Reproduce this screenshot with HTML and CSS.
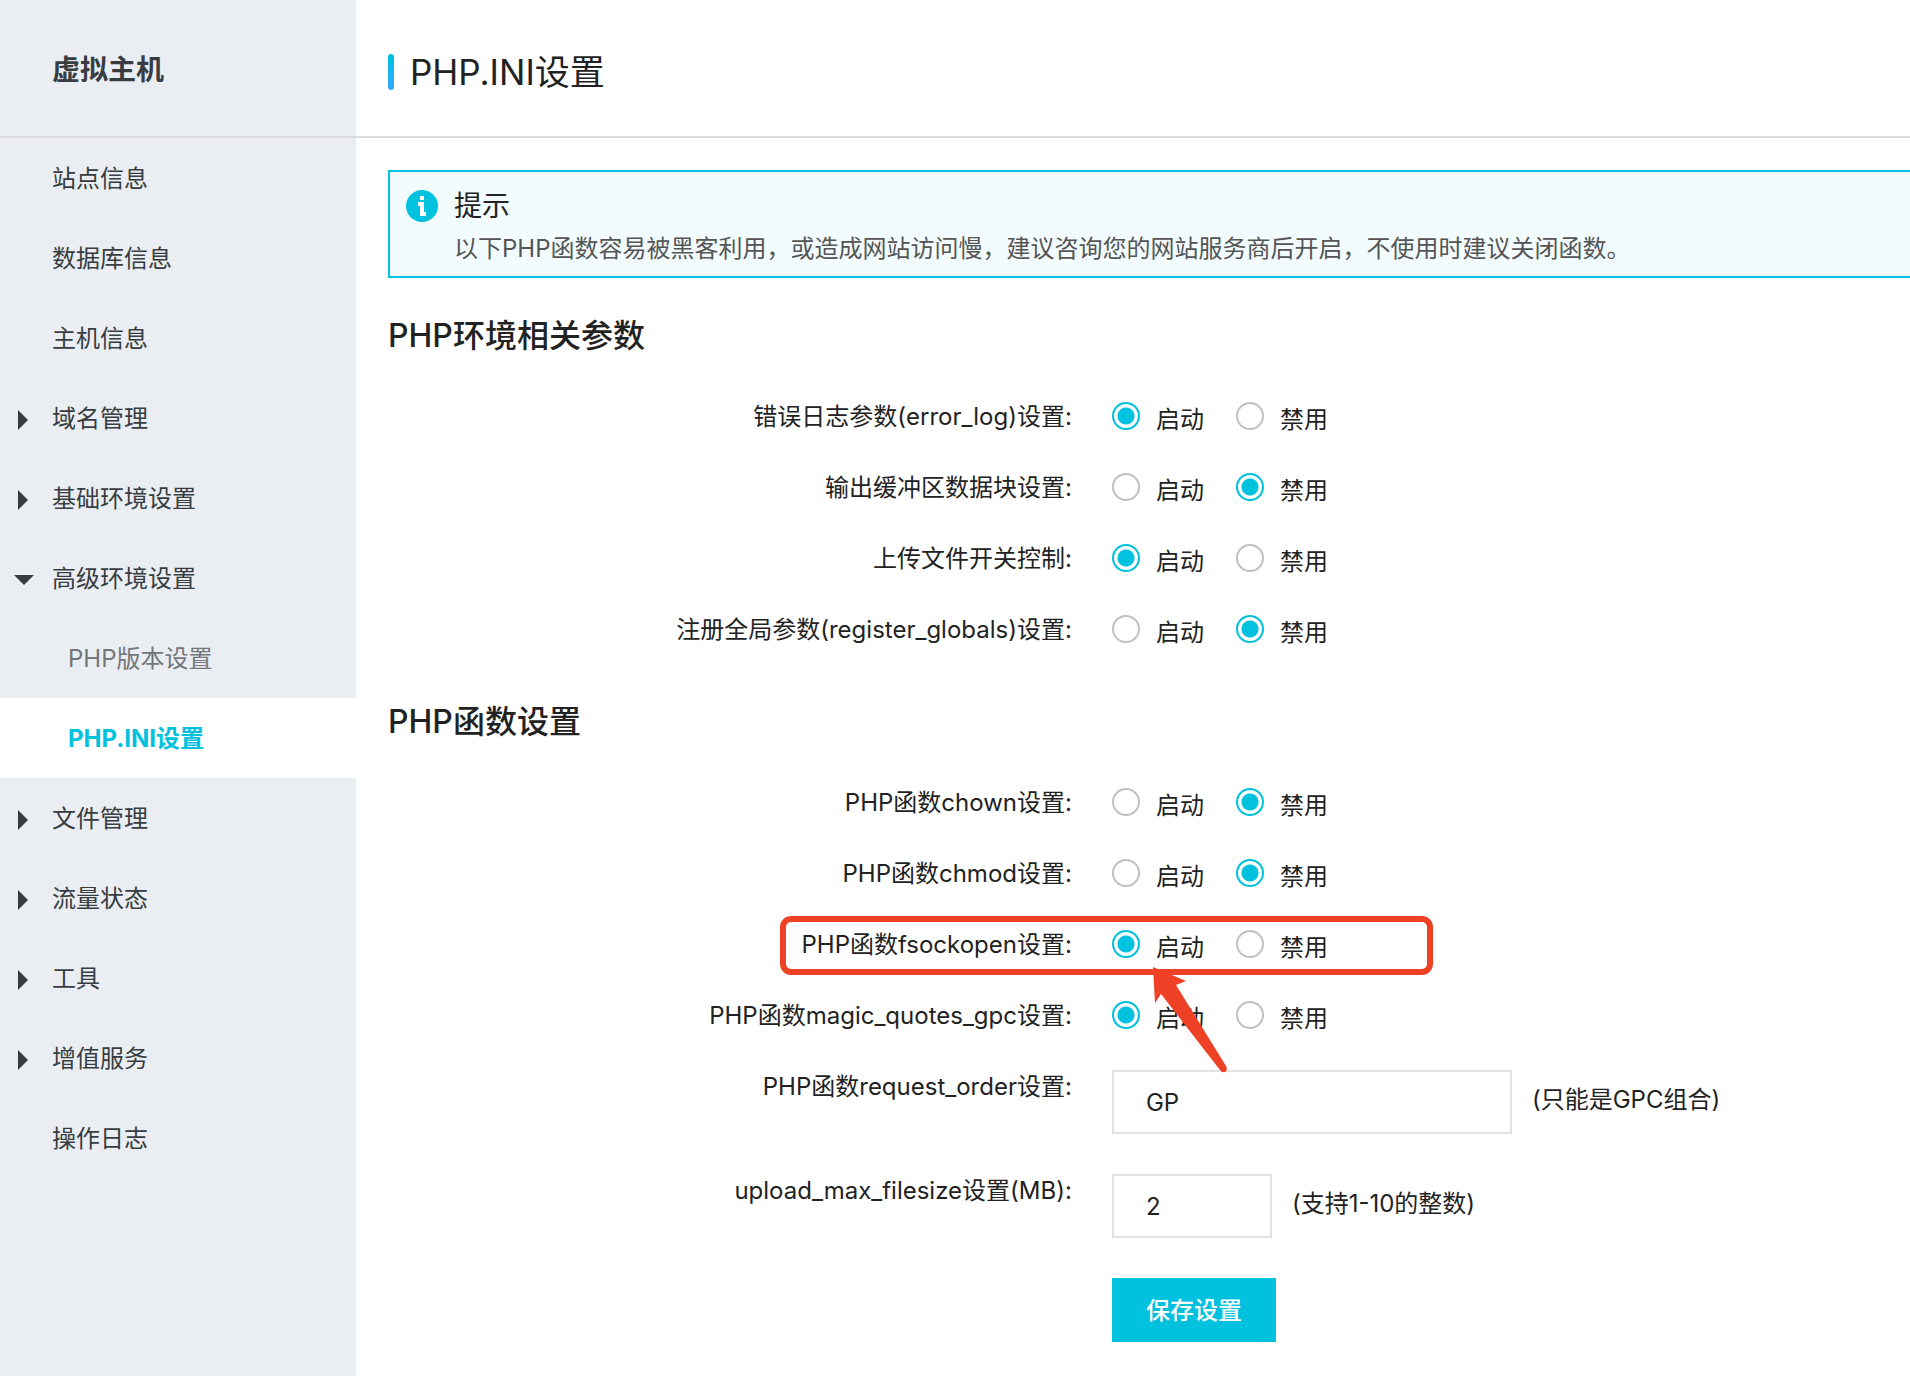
FILE: index.html
```html
<!DOCTYPE html>
<html lang="zh-CN">
<head>
    <meta charset="utf-8">
    <title>PHP.INI设置</title>
    <meta name="viewport" content="width=device-width,initial-scale=1">
    <link rel="stylesheet" href="styles.css">
</head>

<body>
    <svg width="0" height="0" class="symbols" aria-hidden="true">
        <symbol id="arrow-right" viewBox="0 0 20 20"><path d="M4 0L14 10L4 20Z"/></symbol>
        <symbol id="arrow-down" viewBox="0 0 20 20"><path d="M0 5H20L10 15Z"/></symbol>
    </svg>

    <div class="layout">
        <aside class="sidebar">
            <div class="sidebar-title">虚拟主机</div>
            <nav class="menu">
                <a href="#" class="menu-item"><span class="menu-icon"></span>站点信息</a>
                <a href="#" class="menu-item"><span class="menu-icon"></span>数据库信息</a>
                <a href="#" class="menu-item"><span class="menu-icon"></span>主机信息</a>
                <a href="#" class="menu-item"><svg class="menu-icon"><use href="#arrow-right"/></svg>域名管理</a>
                <a href="#" class="menu-item"><svg class="menu-icon"><use href="#arrow-right"/></svg>基础环境设置</a>
                <a href="#" class="menu-item"><svg class="menu-icon"><use href="#arrow-down"/></svg>高级环境设置</a>
                <a href="#" class="menu-item sub">PHP版本设置</a>
                <a href="#" class="menu-item sub active">PHP.INI设置</a>
                <a href="#" class="menu-item"><svg class="menu-icon"><use href="#arrow-right"/></svg>文件管理</a>
                <a href="#" class="menu-item"><svg class="menu-icon"><use href="#arrow-right"/></svg>流量状态</a>
                <a href="#" class="menu-item"><svg class="menu-icon"><use href="#arrow-right"/></svg>工具</a>
                <a href="#" class="menu-item"><svg class="menu-icon"><use href="#arrow-right"/></svg>增值服务</a>
                <a href="#" class="menu-item"><span class="menu-icon"></span>操作日志</a>
            </nav>
        </aside>

        <main class="main">
            <header class="page-header">
                <h1>PHP.INI设置</h1>
            </header>

            <div class="content">
                <div class="notice">
                    <svg class="notice-icon" viewBox="0 0 32 32">
                        <circle cx="16" cy="16" r="16" fill="#00c1de"/>
                        <path d="M14 6H18V10H14ZM12 12H18V22H20V26H14V16H12Z" fill="#fff"/>
                    </svg>
                    <div>
                        <p class="notice-title">提示</p>
                        <p class="notice-text">以下PHP函数容易被黑客利用，或造成网站访问慢，建议咨询您的网站服务商后开启，不使用时建议关闭函数。</p>
                    </div>
                </div>

                <form action="#">
                    <!-- 环境参数 -->
                    <h2>PHP环境相关参数</h2>
                    <div class="row" role="radiogroup" aria-labelledby="l-log">
                        <span class="label" id="l-log">错误日志参数(error_log)设置:</span>
                        <div class="control">
                            <label class="radio"><input type="radio" name="error_log" checked>启动</label>
                            <label class="radio"><input type="radio" name="error_log">禁用</label>
                        </div>
                    </div>
                    <div class="row" role="radiogroup" aria-labelledby="l-buffer">
                        <span class="label" id="l-buffer">输出缓冲区数据块设置:</span>
                        <div class="control">
                            <label class="radio"><input type="radio" name="output_buffering">启动</label>
                            <label class="radio"><input type="radio" name="output_buffering" checked>禁用</label>
                        </div>
                    </div>
                    <div class="row" role="radiogroup" aria-labelledby="l-upload">
                        <span class="label" id="l-upload">上传文件开关控制:</span>
                        <div class="control">
                            <label class="radio"><input type="radio" name="file_uploads" checked>启动</label>
                            <label class="radio"><input type="radio" name="file_uploads">禁用</label>
                        </div>
                    </div>
                    <div class="row" role="radiogroup" aria-labelledby="l-globals">
                        <span class="label" id="l-globals">注册全局参数(register_globals)设置:</span>
                        <div class="control">
                            <label class="radio"><input type="radio" name="register_globals">启动</label>
                            <label class="radio"><input type="radio" name="register_globals" checked>禁用</label>
                        </div>
                    </div>

                    <!-- 函数设置 -->
                    <h2>PHP函数设置</h2>
                    <div class="row" role="radiogroup" aria-labelledby="l-chown">
                        <span class="label" id="l-chown">PHP函数chown设置:</span>
                        <div class="control">
                            <label class="radio"><input type="radio" name="chown">启动</label>
                            <label class="radio"><input type="radio" name="chown" checked>禁用</label>
                        </div>
                    </div>
                    <div class="row" role="radiogroup" aria-labelledby="l-chmod">
                        <span class="label" id="l-chmod">PHP函数chmod设置:</span>
                        <div class="control">
                            <label class="radio"><input type="radio" name="chmod">启动</label>
                            <label class="radio"><input type="radio" name="chmod" checked>禁用</label>
                        </div>
                    </div>
                    <div class="row" role="radiogroup" aria-labelledby="l-fsock">
                        <span class="label" id="l-fsock">PHP函数fsockopen设置:</span>
                        <div class="control">
                            <label class="radio"><input type="radio" name="fsockopen" checked>启动</label>
                            <label class="radio"><input type="radio" name="fsockopen">禁用</label>
                            <span class="mark-box"></span>
                            <svg class="mark-arrow" viewBox="0 0 76 108"><path d="M0 0L33 14L23 18L73 99Q75 103 72 105Q69 106 67 103L8 27L2 36Z" fill="#ee4125"/></svg>
                        </div>
                    </div>
                    <div class="row" role="radiogroup" aria-labelledby="l-magic">
                        <span class="label" id="l-magic">PHP函数magic_quotes_gpc设置:</span>
                        <div class="control">
                            <label class="radio"><input type="radio" name="magic_quotes_gpc" checked>启动</label>
                            <label class="radio"><input type="radio" name="magic_quotes_gpc">禁用</label>
                        </div>
                    </div>
                    <div class="row row-input">
                        <label class="label" for="request_order">PHP函数request_order设置:</label>
                        <div class="control">
                            <input type="text" class="text" id="request_order" value="GP">
                            <span class="hint">(只能是GPC组合)</span>
                        </div>
                    </div>
                    <div class="row row-input">
                        <label class="label" for="upload_max">upload_max_filesize设置(MB):</label>
                        <div class="control">
                            <input type="text" class="text short" id="upload_max" value="2">
                            <span class="hint">(支持1-10的整数)</span>
                        </div>
                    </div>
                    <div class="row row-input">
                        <span class="label"></span>
                        <div class="control">
                            <button type="submit" class="btn">保存设置</button>
                        </div>
                    </div>
                </form>
            </div>
        </main>
    </div>
</body>
</html>
```

FILE: styles.css
```css
html, body {
    margin: 0;
    padding: 0;
}
body {
    background: #fff;
    color: #222;
    font-family: Inter, "Noto Sans CJK SC", sans-serif;
    font-size: 24px;
    line-height: 40px;
}
* {
    box-sizing: border-box;
}
h1, h2, p {
    margin: 0;
}
.symbols {
    position: absolute;
}
.layout {
    display: flex;
    min-height: 100vh;
    overflow: hidden;
}

/* 左侧菜单 */
.sidebar {
    flex: 0 0 356px;
    background: #eaedf1;
    color: #373d41;
}
.sidebar-title {
    height: 138px;
    padding: 2px 0 0 52px;
    border-bottom: 2px solid #d9dadd;
    font-size: 28px;
    font-weight: 700;
    line-height: 136px;
}
.menu-item {
    display: flex;
    align-items: center;
    height: 80px;
    padding: 2px 0 0 14px;
    color: #373d41;
    text-decoration: none;
}
.menu-icon {
    width: 20px;
    height: 20px;
    margin: 2px 18px 0 0;
    fill: #373d41;
}
.menu-item.sub {
    padding-left: 68px;
    color: #73777a;
}
.menu-item.active {
    background: #fff;
    color: #00c1de;
    font-weight: 700;
}

/* 右侧内容 */
.main {
    flex: 1;
    min-width: 0;
}
.page-header {
    display: flex;
    align-items: center;
    height: 138px;
    padding: 8px 0 0 32px;
    border-bottom: 2px solid #ddd;
}
.page-header::before {
    content: "";
    width: 6px;
    height: 36px;
    margin-right: 16px;
    border-radius: 3px;
    background: linear-gradient(#00c1de, #35a8ff);
}
h1 {
    font-size: 35px;
    font-weight: 400;
}
.content {
    padding: 32px 0 32px 32px;
}
.notice {
    display: flex;
    height: 108px;
    padding: 14px 16px;
    border: 2px solid #00c1de;
    border-right: 0;
    background: #f2fbfe;
}
.notice-icon {
    flex: none;
    width: 32px;
    height: 32px;
    margin: 4px 16px 0 0;
}
.notice-title {
    font-size: 28px;
}
.notice-text {
    margin-top: 3px;
    color: #555;
}
h2 {
    margin: 34px 0 37px;
    font-size: 32px;
    font-weight: 500;
    line-height: 48px;
}
.row + h2 {
    margin-top: 48px;
}

/* 表单 */
.row {
    display: flex;
    gap: 40px;
    margin-bottom: 31px;
}
.label {
    flex: 0 0 calc(45% - 1px);
    text-align: right;
}
.control {
    position: relative;
    display: flex;
    height: 40px;
}
.radio {
    display: flex;
    width: 124px;
    padding-top: 3px;
}
.radio input {
    appearance: none;
    width: 28px;
    height: 28px;
    margin: 2px 16px 0 0;
    border: 2px solid #c1c1c1;
    border-radius: 50%;
    background: #fff;
}
.radio input:checked {
    border-color: #00c1de;
    background: radial-gradient(circle, #00c1de 8px, #fff 9px);
}
.row-input {
    margin-bottom: 37px;
}
.row-input .control {
    height: auto;
    padding-top: 3px;
}
.text {
    width: 400px;
    height: 64px;
    padding: 0 32px;
    border: 2px solid #e3e3e3;
    background: #fff;
    color: #222;
    font: inherit;
}
.text.short {
    width: 160px;
}
.hint {
    margin: 10px 0 0 20px;
}
.btn {
    height: 64px;
    padding: 2px 34px 0;
    border: 0;
    background: #00c1de;
    color: #fff;
    font: inherit;
    font-weight: 500;
}

/* 标注 */
.mark-box {
    position: absolute;
    top: -9px;
    left: -332px;
    width: 653px;
    height: 59px;
    border: 6px solid #ee4125;
    border-radius: 11px;
    pointer-events: none;
}
.mark-arrow {
    position: absolute;
    z-index: 1;
    top: 42px;
    left: 41px;
    width: 76px;
    height: 108px;
    pointer-events: none;
}
```
